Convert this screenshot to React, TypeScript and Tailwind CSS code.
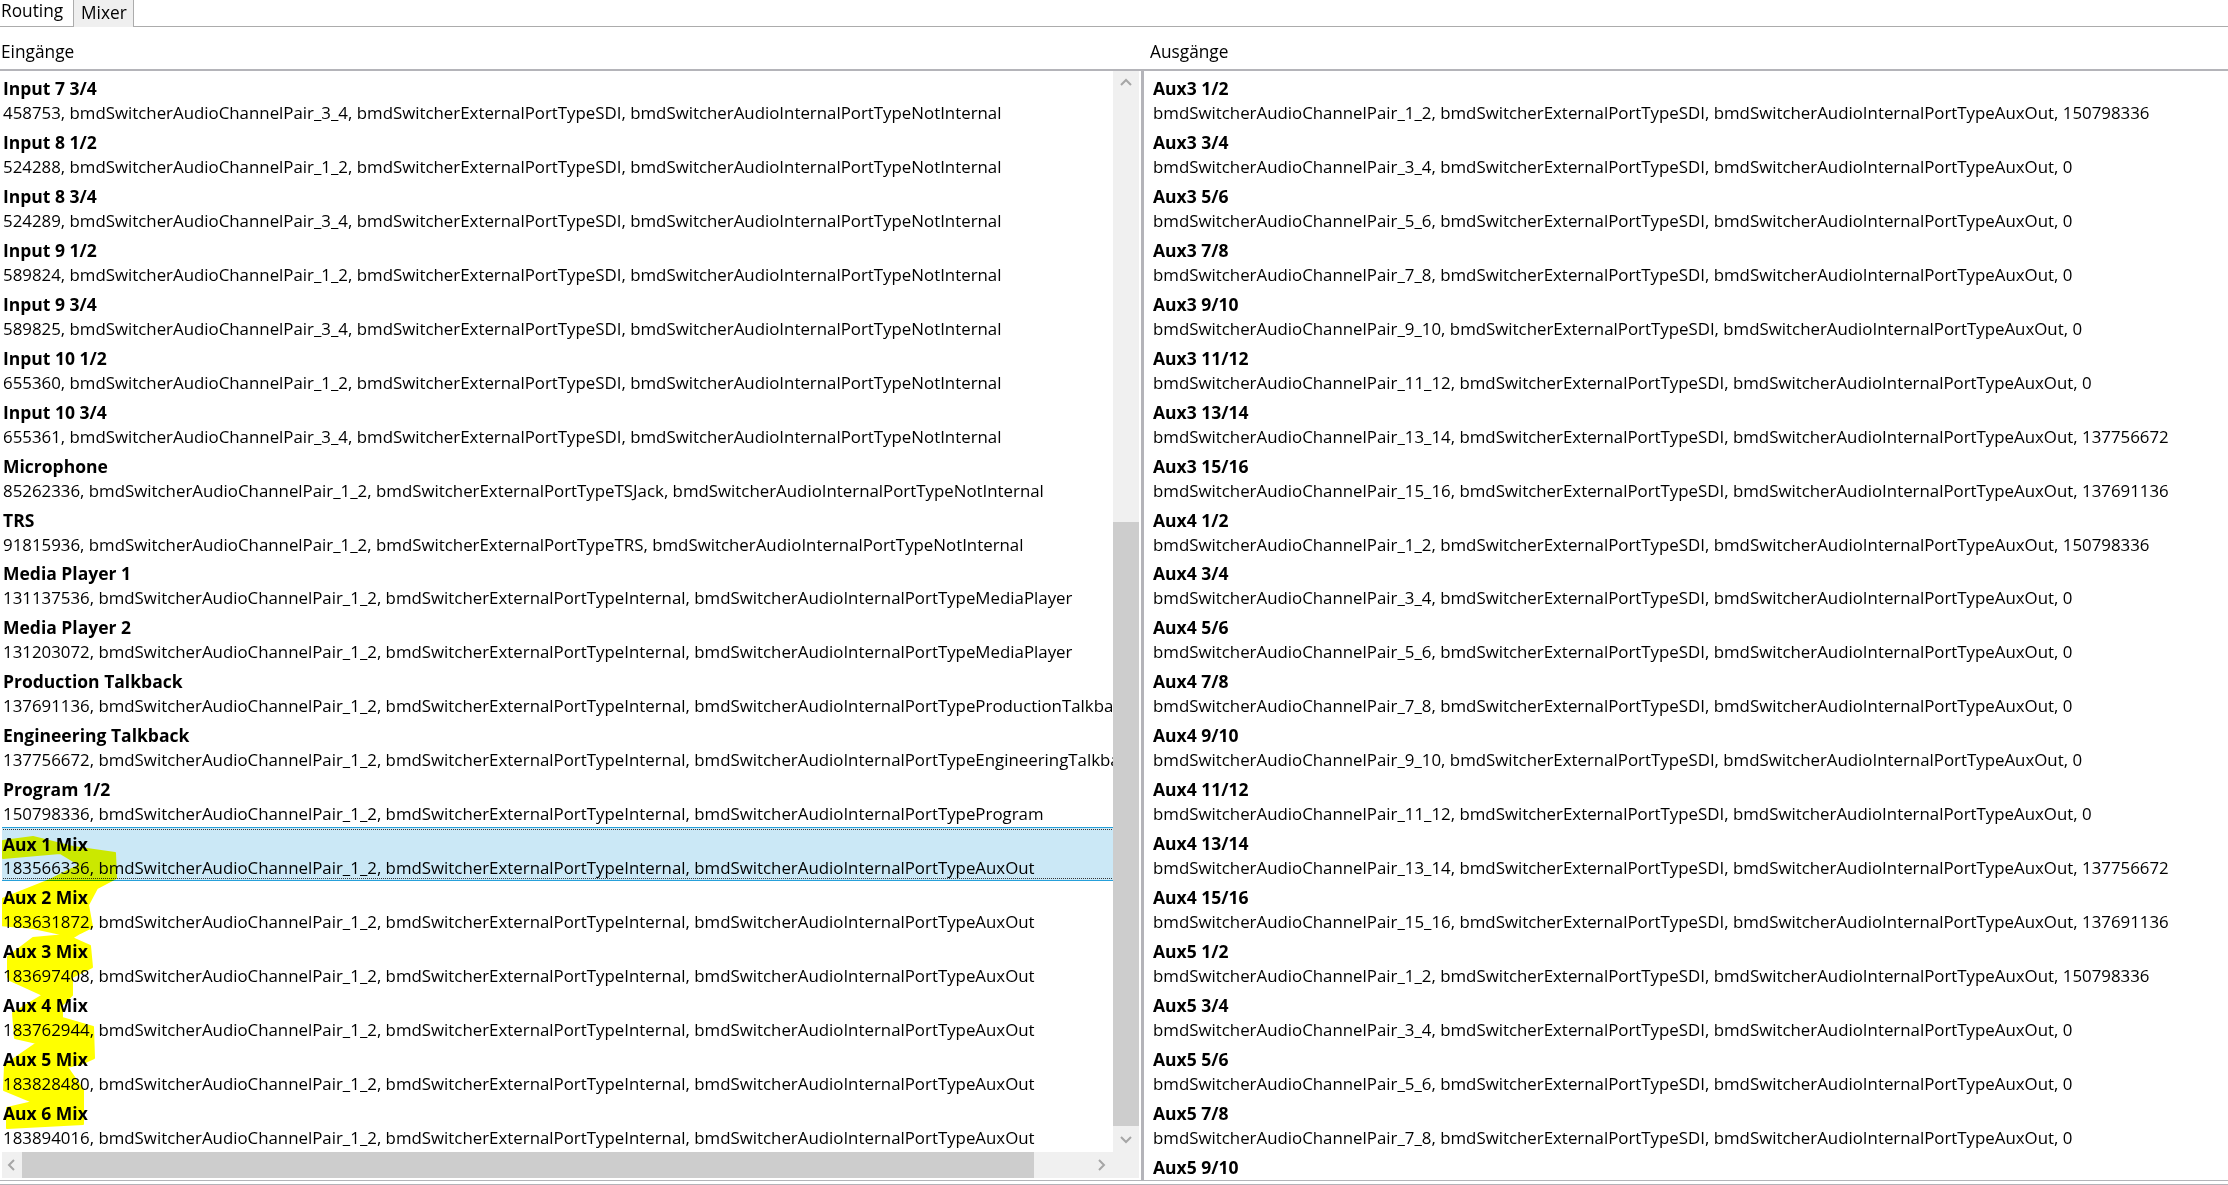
const inputs = [
  ['Input 7 3/4', '458753, bmdSwitcherAudioChannelPair_3_4, bmdSwitcherExternalPortTypeSDI, bmdSwitcherAudioInternalPortTypeNotInternal'],
  ['Input 8 1/2', '524288, bmdSwitcherAudioChannelPair_1_2, bmdSwitcherExternalPortTypeSDI, bmdSwitcherAudioInternalPortTypeNotInternal'],
  ['Input 8 3/4', '524289, bmdSwitcherAudioChannelPair_3_4, bmdSwitcherExternalPortTypeSDI, bmdSwitcherAudioInternalPortTypeNotInternal'],
  ['Input 9 1/2', '589824, bmdSwitcherAudioChannelPair_1_2, bmdSwitcherExternalPortTypeSDI, bmdSwitcherAudioInternalPortTypeNotInternal'],
  ['Input 9 3/4', '589825, bmdSwitcherAudioChannelPair_3_4, bmdSwitcherExternalPortTypeSDI, bmdSwitcherAudioInternalPortTypeNotInternal'],
  ['Input 10 1/2', '655360, bmdSwitcherAudioChannelPair_1_2, bmdSwitcherExternalPortTypeSDI, bmdSwitcherAudioInternalPortTypeNotInternal'],
  ['Input 10 3/4', '655361, bmdSwitcherAudioChannelPair_3_4, bmdSwitcherExternalPortTypeSDI, bmdSwitcherAudioInternalPortTypeNotInternal'],
  ['Microphone', '85262336, bmdSwitcherAudioChannelPair_1_2, bmdSwitcherExternalPortTypeTSJack, bmdSwitcherAudioInternalPortTypeNotInternal'],
  ['TRS', '91815936, bmdSwitcherAudioChannelPair_1_2, bmdSwitcherExternalPortTypeTRS, bmdSwitcherAudioInternalPortTypeNotInternal'],
  ['Media Player 1', '131137536, bmdSwitcherAudioChannelPair_1_2, bmdSwitcherExternalPortTypeInternal, bmdSwitcherAudioInternalPortTypeMediaPlayer'],
  ['Media Player 2', '131203072, bmdSwitcherAudioChannelPair_1_2, bmdSwitcherExternalPortTypeInternal, bmdSwitcherAudioInternalPortTypeMediaPlayer'],
  ['Production Talkback', '137691136, bmdSwitcherAudioChannelPair_1_2, bmdSwitcherExternalPortTypeInternal, bmdSwitcherAudioInternalPortTypeProductionTalkback'],
  ['Engineering Talkback', '137756672, bmdSwitcherAudioChannelPair_1_2, bmdSwitcherExternalPortTypeInternal, bmdSwitcherAudioInternalPortTypeEngineeringTalkback'],
  ['Program 1/2', '150798336, bmdSwitcherAudioChannelPair_1_2, bmdSwitcherExternalPortTypeInternal, bmdSwitcherAudioInternalPortTypeProgram'],
  ['Aux 1 Mix', '183566336, bmdSwitcherAudioChannelPair_1_2, bmdSwitcherExternalPortTypeInternal, bmdSwitcherAudioInternalPortTypeAuxOut'],
  ['Aux 2 Mix', '183631872, bmdSwitcherAudioChannelPair_1_2, bmdSwitcherExternalPortTypeInternal, bmdSwitcherAudioInternalPortTypeAuxOut'],
  ['Aux 3 Mix', '183697408, bmdSwitcherAudioChannelPair_1_2, bmdSwitcherExternalPortTypeInternal, bmdSwitcherAudioInternalPortTypeAuxOut'],
  ['Aux 4 Mix', '183762944, bmdSwitcherAudioChannelPair_1_2, bmdSwitcherExternalPortTypeInternal, bmdSwitcherAudioInternalPortTypeAuxOut'],
  ['Aux 5 Mix', '183828480, bmdSwitcherAudioChannelPair_1_2, bmdSwitcherExternalPortTypeInternal, bmdSwitcherAudioInternalPortTypeAuxOut'],
  ['Aux 6 Mix', '183894016, bmdSwitcherAudioChannelPair_1_2, bmdSwitcherExternalPortTypeInternal, bmdSwitcherAudioInternalPortTypeAuxOut'],
];

const pairs = ['1_2', '3_4', '5_6', '7_8', '9_10', '11_12', '13_14', '15_16'];
const tails = ['150798336', '0', '0', '0', '0', '0', '137756672', '137691136'];

function outputRows(aux: number, count: number) {
  return pairs.slice(0, count).map((pair, i) => [
    `Aux${aux} ${pair.replace('_', '/')}`,
    `bmdSwitcherAudioChannelPair_${pair}, bmdSwitcherExternalPortTypeSDI, bmdSwitcherAudioInternalPortTypeAuxOut, ${tails[i]}`,
  ]);
}

const outputs = [...outputRows(3, 8), ...outputRows(4, 8), ...outputRows(5, 5)];

function Row({ title, detail, selected }: { title: string; detail?: string; selected?: boolean }) {
  if (selected) {
    return (
      <div className="h-[53.95px] border-y border-[#26a0da] bg-[#cbe8f6] p-px">
        <div className="h-full border-y border-dotted border-[#333] pt-[2px]">
          <div className="h-6 text-[17.5px] font-bold leading-6 whitespace-nowrap">{title}</div>
          <div className="h-6 leading-6 whitespace-nowrap">{detail}</div>
        </div>
      </div>
    );
  }
  return (
    <div className="h-[53.95px] pt-1 pl-px">
      <div className="h-[25px] text-[17.5px] font-bold leading-6 whitespace-nowrap">{title}</div>
      <div className="h-6 leading-6 whitespace-nowrap">{detail}</div>
    </div>
  );
}

function ScrollArrow({ d }: { d: string }) {
  return (
    <svg width="14" height="14" viewBox="0 0 14 14" fill="none" stroke="#a6a6a6" strokeWidth="2">
      <path d={d} />
    </svg>
  );
}

export default function App() {
  return (
    <div className="w-[2228px] h-[1185px] overflow-hidden bg-white text-black text-[16.85px] font-['Open_Sans','Noto_Sans',sans-serif] flex flex-col">
      {/* Tabs */}
      <div className="h-[27px] flex border-b border-[#acacac] shrink-0 text-[17.3px]">
        <div className="w-[73px] pl-[1px] leading-[22px]">Routing</div>
        <div className="w-[61px] h-[27px] border-x border-[#acacac] bg-[#efefef] pl-[7px] leading-[26px]">Mixer</div>
      </div>

      {/* Column headers */}
      <div className="h-[44px] flex border-b-2 border-[#b4b4b9] shrink-0 text-[17.3px]">
        <div className="w-[1150px] pt-[13px] pl-[1px] leading-6">Eingänge</div>
        <div className="pt-[13px] leading-6">Ausgänge</div>
      </div>

      <div className="h-[1110px] flex shrink-0 border-b border-[#b4b4b9]">
        {/* Inputs */}
        <div className="w-[1141px] pl-[2px] pr-[2px] pb-[2px] flex flex-col shrink-0">
          <div className="h-[1081px] flex shrink-0">
            <div className="relative w-[1111px] pt-px overflow-hidden shrink-0">
              {inputs.map(([title, detail], i) => (
                <Row key={title} title={title} detail={detail} selected={i === 14} />
              ))}
              {/* highlighter scribble */}
              <svg className="absolute left-0 top-0 mix-blend-multiply pointer-events-none" width="120" height="1081" viewBox="2 71 120 1081">
                <path
                  fill="#ffff00"
                  stroke="#ffff00"
                  strokeWidth="2"
                  strokeLinejoin="round"
                  d="M3 841 L33 837 L73 847 L115 853 L116 878 L97 888 L88 905 L92 927 L80 933 L72 938 L90 946 L92 967 L72 977 L72 995 L62 1005 L62 1018 L93 1027 L94 1058 L83 1063 L67 1067 L83 1090 L83 1124 L7 1128 L7 1108 L33 1102 L4 1090 L5 1065 L37 1043 L15 1038 L13 1013 L43 995 L10 980 L8 977 L8 957 L33 938 L66 935 L33 928 L0 925 L0 900 L50 880 L80 865 L60 853 L3 858 Z"
                />
              </svg>
            </div>
            {/* Vertical scrollbar */}
            <div className="w-[26px] bg-[#f0f0f0] flex flex-col justify-between items-center shrink-0">
              <div className="h-[451px] flex justify-center pt-[5px]">
                <ScrollArrow d="M2 9 L7 4 L12 9" />
              </div>
              <div className="w-full h-[604px] bg-[#cdcdcd]" />
              <div className="h-[26px] flex items-center">
                <ScrollArrow d="M2 5 L7 10 L12 5" />
              </div>
            </div>
          </div>
          {/* Horizontal scrollbar */}
          <div className="h-[26px] bg-[#f0f0f0] flex shrink-0">
            <div className="w-[20px] flex items-center justify-center">
              <ScrollArrow d="M9 2 L4 7 L9 12" />
            </div>
            <div className="w-[1012px] bg-[#cdcdcd]" />
            <div className="flex-1 flex items-center pl-[60px]">
              <ScrollArrow d="M5 2 L10 7 L5 12" />
            </div>
          </div>
        </div>

        {/* Divider */}
        <div className="w-[3px] bg-[#b4b4b9] shrink-0" />

        {/* Outputs */}
        <div className="flex-1 overflow-hidden pt-px pl-[8px]">
          {outputs.map(([title, detail]) => (
            <Row key={title} title={title} detail={detail} />
          ))}
        </div>
      </div>

      {/* Bottom edge */}
      <div className="mt-[3px] h-px bg-[#b4b4b9] shrink-0" />
    </div>
  );
}
